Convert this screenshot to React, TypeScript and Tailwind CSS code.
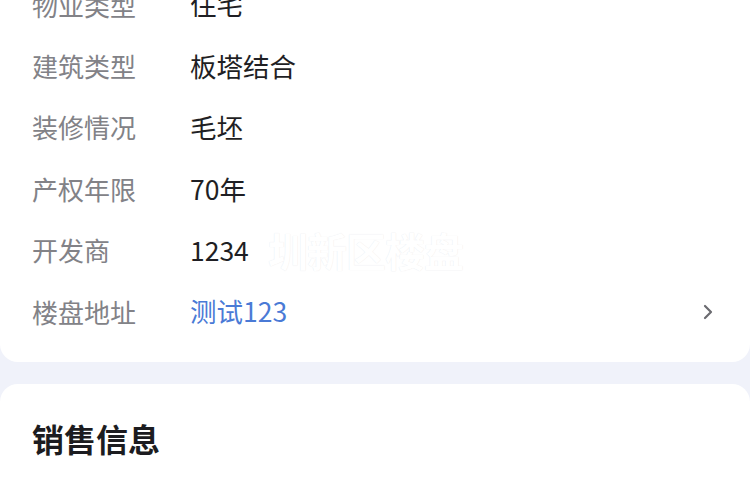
const rows: { label: string; value: string; link?: boolean }[] = [
  { label: '物业类型', value: '住宅' },
  { label: '建筑类型', value: '板塔结合' },
  { label: '装修情况', value: '毛坯' },
  { label: '产权年限', value: '70年' },
  { label: '开发商', value: '1234' },
  { label: '楼盘地址', value: '测试123', link: true },
];

export default function App() {
  return (
    <div
      className="w-[750px] h-[500px] overflow-hidden bg-[#f0f2fa] flex flex-col"
      style={{ fontFamily: '"Noto Sans CJK SC", "Noto Sans", sans-serif' }}
    >
      {/* 基本信息 */}
      <div className="relative mt-[-26px] bg-white rounded-b-[18px] pb-[20px] shrink-0">
        {rows.map((r) => (
          <div key={r.label} className="flex items-center h-[61.4px] pl-[32px] pr-[36px]">
            <div className="w-[158px] text-[26px] leading-none text-[#828287]">{r.label}</div>
            <div
              className={`flex-1 text-[26.5px] leading-none ${r.link ? 'text-[#4a7ad6]' : 'text-[#1f1f24]'}`}
            >
              {r.value}
            </div>
            {r.link && (
              <svg width="12" height="18" viewBox="0 0 12 18" fill="none">
                <path d="M3 3l6 6-6 6" stroke="#6b6b70" strokeWidth="2.2" strokeLinecap="round" strokeLinejoin="round" />
              </svg>
            )}
          </div>
        ))}
        {/* watermark */}
        <div className="absolute left-[268px] top-[256px] text-[40px] font-bold leading-none text-white tracking-tight [text-shadow:0_0_1px_#e4e4e8]">
          圳新区楼盘
        </div>
      </div>

      {/* 销售信息 */}
      <div className="mt-[22px] flex-1 bg-white rounded-t-[18px] pt-[38px] px-[32px]">
        <div className="text-[32px] font-bold leading-none text-[#1c1c20]">销售信息</div>
      </div>
    </div>
  );
}
